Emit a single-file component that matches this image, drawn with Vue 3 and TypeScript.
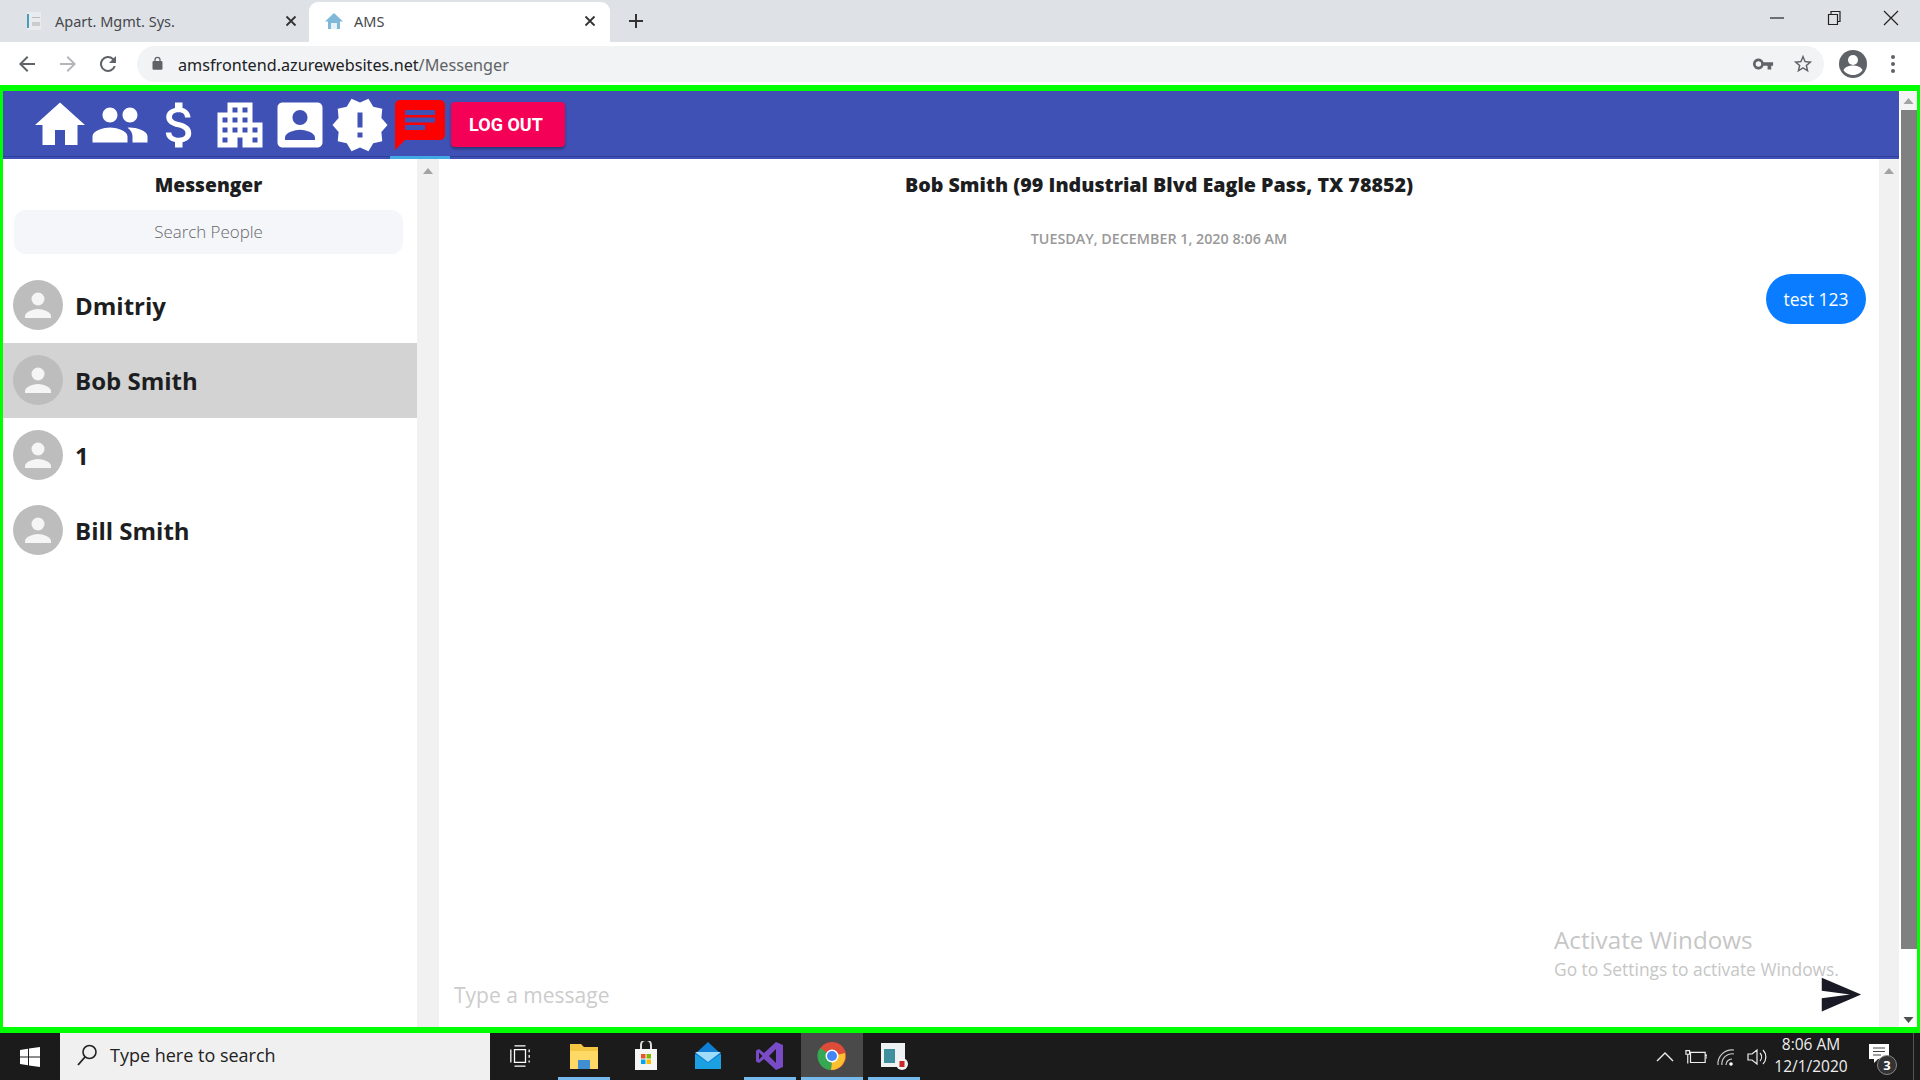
<script setup lang="ts">
interface NavIcon { name: string; d: string; active?: boolean }
const navIcons: NavIcon[] = [
  { name: 'home', d: 'M10 20v-6h4v6h5v-8h3L12 3 2 12h3v8z' },
  { name: 'people', d: 'M16 11c1.66 0 2.99-1.34 2.99-3S17.66 5 16 5c-1.66 0-3 1.34-3 3s1.34 3 3 3zm-8 0c1.66 0 2.99-1.34 2.99-3S9.66 5 8 5C6.34 5 5 6.34 5 8s1.34 3 3 3zm0 2c-2.33 0-7 1.17-7 3.5V19h14v-2.5c0-2.33-4.67-3.5-7-3.5zm8 0c-.29 0-.62.02-.97.05 1.16.84 1.97 1.97 1.97 3.45V19h6v-2.5c0-2.33-4.67-3.5-7-3.5z' },
  { name: 'money', d: 'M11.8 10.9c-2.27-.59-3-1.2-3-2.15 0-1.09 1.01-1.85 2.7-1.85 1.78 0 2.44.85 2.5 2.1h2.21c-.07-1.72-1.12-3.3-3.21-3.81V3h-3v2.16c-1.94.42-3.5 1.68-3.5 3.61 0 2.31 1.91 3.46 4.7 4.13 2.5.6 3 1.48 3 2.41 0 .69-.49 1.79-2.7 1.79-2.06 0-2.87-.92-2.98-2.1h-2.2c.12 2.19 1.76 3.42 3.68 3.83V21h3v-2.15c1.95-.37 3.5-1.5 3.5-3.55 0-2.84-2.43-3.81-4.7-4.4z' },
  { name: 'building', d: 'M17 11V3H7v4H3v14h8v-4h2v4h8V11h-4zM7 19H5v-2h2v2zm0-4H5v-2h2v2zm0-4H5V9h2v2zm4 4H9v-2h2v2zm0-4H9V9h2v2zm0-4H9V5h2v2zm4 8h-2v-2h2v2zm0-4h-2V9h2v2zm0-4h-2V5h2v2zm4 12h-2v-2h2v2zm0-4h-2v-2h2v2z' },
  { name: 'account', d: 'M3 5v14c0 1.1.89 2 2 2h14c1.1 0 2-.9 2-2V5c0-1.1-.9-2-2-2H5c-1.11 0-2 .9-2 2zm12 4c0 1.66-1.34 3-3 3s-3-1.34-3-3 1.34-3 3-3 3 1.34 3 3zm-9 8c0-2 4-3.1 6-3.1s6 1.1 6 3.1v1H6v-1z' },
  { name: 'alert', d: 'M23 12l-2.44-2.78.34-3.68-3.61-.82-1.89-3.18L12 3 8.6 1.54 6.71 4.72l-3.61.81.34 3.68L1 12l2.44 2.78-.34 3.69 3.61.82 1.89 3.18L12 21l3.4 1.46 1.89-3.18 3.61-.82-.34-3.68L23 12zm-10 5h-2v-2h2v2zm0-4h-2V7h2v6z' },
  { name: 'chat', active: true, d: 'M20 2H4c-1.1 0-1.99.9-1.99 2L2 22l4-4h14c1.1 0 2-.9 2-2V4c0-1.1-.9-2-2-2zM6 9h12v2H6V9zm8 5H6v-2h8v2zm4-6H6V6h12v2z' },
]
const people: { name: string; selected?: boolean }[] = [
  { name: 'Dmitriy' },
  { name: 'Bob Smith', selected: true },
  { name: '1' },
  { name: 'Bill Smith' },
]
</script>

<template>
  <div class="screen">
    <div class="tabstrip">
      <div class="tab">
        <svg class="fav" viewBox="0 0 20 20"><rect x="3" y="1" width="14" height="18" fill="#e8ecef" /><rect x="3" y="3" width="2" height="14" fill="#4a9db5" /><rect x="8" y="6" width="8" height="1" fill="#bbb" /><rect x="8" y="11" width="8" height="4" fill="#ccc" /></svg>
        <span class="tabtitle">Apart. Mgmt. Sys.</span>
        <svg class="tabx" viewBox="0 0 12 12"><path d="M1.5 1.5l9 9m0-9l-9 9" stroke="#333" stroke-width="1.8" /></svg>
      </div>
      <div class="tab current">
        <svg class="fav" viewBox="0 0 20 20"><path d="M10 2L1 10.500h3V18h12v-7.500h3z" fill="#7fb8d8" /><path d="M7 18v-6h6v6z" fill="#e6f2f8" /></svg>
        <span class="tabtitle">AMS</span>
        <svg class="tabx" viewBox="0 0 12 12"><path d="M1.5 1.5l9 9m0-9l-9 9" stroke="#333" stroke-width="1.8" /></svg>
      </div>
      <svg class="newtab" viewBox="0 0 16 16"><path d="M8 1v14M1 8h14" stroke="#333" stroke-width="2" /></svg>
      <div class="winctl">
        <svg viewBox="0 0 16 16" class="wbtn"><path d="M1 8h14" stroke="#222" stroke-width="1.2" /></svg>
        <svg viewBox="0 0 16 16" class="wbtn"><path d="M2.500 4.500h9v10h-9zM5 4.500V1.500h9v10h-2.500" fill="none" stroke="#222" stroke-width="1.2" /></svg>
        <svg viewBox="0 0 16 16" class="wbtn"><path d="M1 1l14 14m0-14L1 15" stroke="#222" stroke-width="1.2" /></svg>
      </div>
    </div>

    <div class="toolbar">
      <svg class="tool" viewBox="0 0 24 24"><path d="M20 11H7.800l5.600-5.600L12 4l-8 8 8 8 1.400-1.400L7.800 13H20z" fill="#5f6368" /></svg>
      <svg class="tool second" viewBox="0 0 24 24"><path d="M4 11h12.200l-5.600-5.600L12 4l8 8-8 8-1.400-1.400 5.600-5.600H4z" fill="#b4b6b9" /></svg>
      <svg class="tool" viewBox="0 0 24 24"><path d="M17.650 6.350A8 8 0 1 0 19.730 14h-2.080a6 6 0 1 1-1.410-6.240L13 11h7V4z" fill="#5f6368" /></svg>
      <div class="omnibox">
        <svg class="lock" viewBox="0 0 24 24"><path d="M18 8h-1V6a5 5 0 0 0-10 0v2H6a2 2 0 0 0-2 2v10c0 1.100.9 2 2 2h12a2 2 0 0 0 2-2V10a2 2 0 0 0-2-2zM9 6a3 3 0 0 1 6 0v2H9z" fill="#5f6368" /></svg>
        <span class="url">amsfrontend.azurewebsites.net<span class="urlpath">/Messenger</span></span>
        <svg class="key" viewBox="0 0 24 24"><path d="M12.650 10A6 6 0 1 0 12.650 14H17v4h4v-4h2v-4zM7 15a3 3 0 1 1 0-6 3 3 0 0 1 0 6z" fill="#5f6368" /></svg>
        <svg class="star" viewBox="0 0 24 24"><path d="M22 9.240l-7.190-.62L12 2 9.190 8.630 2 9.240l5.460 4.730L5.820 21 12 17.270 18.180 21l-1.630-7.030L22 9.240zM12 15.400l-3.760 2.270 1-4.280-3.320-2.880 4.380-.38L12 6.100l1.710 4.040 4.380.38-3.320 2.880 1 4.280L12 15.400z" fill="#5f6368" /></svg>
      </div>
      <svg class="profile" viewBox="0 0 28 28"><circle cx="14" cy="14" r="14" fill="#5f6368" /><circle cx="14" cy="10" r="5" fill="#fff" /><path d="M4.500 20c2-3.500 6-4.500 9.500-4.500s7.500 1 9.500 4.500c-2 3.500-6 5-9.500 5s-7.500-1.500-9.500-5z" fill="#fff" /></svg>
      <svg class="dots" viewBox="0 0 4 20"><circle cx="2" cy="3" r="2" fill="#5f6368" /><circle cx="2" cy="10" r="2" fill="#5f6368" /><circle cx="2" cy="17" r="2" fill="#5f6368" /></svg>
    </div>

    <div class="frame">
      <div class="page">
        <header class="appbar">
          <nav class="nav">
            <a v-for="icon in navIcons" :key="icon.name" class="navitem" :class="{ active: icon.active }">
              <svg viewBox="0 0 24 24" class="navicon"><path :d="icon.d" :fill="icon.active ? '#ff0000' : '#ffffff'" /></svg>
            </a>
          </nav>
          <button class="logout">LOG OUT</button>
        </header>

        <div class="content">
          <aside class="sidebar">
            <div class="sidehead">
              <div class="sidetitle">Messenger</div>
              <div class="search">Search People</div>
            </div>
            <div class="peoplelist">
              <div v-for="p in people" :key="p.name" class="person" :class="{ selected: p.selected }">
                <svg class="avatar" viewBox="0 0 50 50">
                  <circle cx="25" cy="25" r="25" fill="#bdbdbd" />
                  <circle cx="25" cy="19" r="6.500" fill="#f5f5f5" />
                  <path d="M12 38v-2c0-4 8-7 13-7s13 3 13 7v2z" fill="#f5f5f5" />
                </svg>
                <span class="pname">{{ p.name }}</span>
              </div>
            </div>
          </aside>
          <div class="sbar">
            <svg class="sarrow" viewBox="0 0 10 6"><path d="M5 0l5 6H0z" fill="#a3a3a3" /></svg>
          </div>

          <section class="chat">
            <div class="chattitle">Bob Smith (99 Industrial Blvd Eagle Pass, TX 78852)</div>
            <div class="chatdate">TUESDAY, DECEMBER 1, 2020 8:06 AM</div>
            <div class="messages">
              <div class="bubble">test 123</div>
            </div>
            <div class="composer">
              <span class="typemsg">Type a message</span>
              <svg class="send" viewBox="0 0 24 24"><path d="M2.010 21L23 12 2.010 3 2 10l15 2-15 2z" fill="#1a1a26" /></svg>
            </div>
            <div class="activate">
              <div class="act1">Activate Windows</div>
              <div class="act2">Go to Settings to activate Windows.</div>
            </div>
          </section>
          <div class="sbar chatbar">
            <svg class="sarrow" viewBox="0 0 10 6"><path d="M5 0l5 6H0z" fill="#a3a3a3" /></svg>
          </div>
        </div>
      </div>
      <div class="pagebar">
        <div class="pbtn"><svg viewBox="0 0 10 6" class="parrow"><path d="M5 0l5 6H0z" fill="#a3a3a3" /></svg></div>
        <div class="pthumb"></div>
        <div class="pbtn pbottom"><svg viewBox="0 0 10 6" class="parrow"><path d="M5 6L0 0h10z" fill="#505050" /></svg></div>
      </div>
    </div>

    <footer class="taskbar">
      <svg class="winlogo" viewBox="0 0 20 20"><path d="M0 3l8-1.200V9.500H0zM9 1.600L20 0v9.500H9zM0 10.500h8v7.700L0 17zM9 10.500h11V20L9 18.400z" fill="#fff" /></svg>
      <div class="tasksearch">
        <svg class="mag" viewBox="0 0 24 24"><circle cx="14.500" cy="9" r="6.500" fill="none" stroke="#222" stroke-width="1.600" /><path d="M10 14L3 22" stroke="#222" stroke-width="1.800" /></svg>
        <span>Type here to search</span>
      </div>
      <div class="tasks">
        <div class="task plain">
          <svg viewBox="0 0 24 24" class="ticon small"><path d="M6 1h12M6 5h12v14H6zM6 23h12M2 5v14M22 5v3M22 11v3M22 17v2" fill="none" stroke="#fff" stroke-width="1.400" /></svg>
        </div>
        <div class="task running">
          <svg viewBox="0 0 30 30" class="ticon"><path d="M1 3h11l3 3h14v22H1z" fill="#f4c542" /><rect x="1" y="10" width="28" height="18" fill="#ffd966" /><rect x="9" y="19" width="12" height="9" fill="#3f8fd2" /></svg>
        </div>
        <div class="task">
          <svg viewBox="0 0 30 30" class="ticon"><path d="M10 8V4a5 5 0 0 1 10 0v4" fill="none" stroke="#ddd" stroke-width="2" /><rect x="4" y="8" width="22" height="21" fill="#f5f5f5" /><rect x="10" y="13" width="4.500" height="4.500" fill="#e8542f" /><rect x="15.500" y="13" width="4.500" height="4.500" fill="#7fb900" /><rect x="10" y="18.500" width="4.500" height="4.500" fill="#00a4ef" /><rect x="15.500" y="18.500" width="4.500" height="4.500" fill="#ffb900" /></svg>
        </div>
        <div class="task">
          <svg viewBox="0 0 30 30" class="ticon"><path d="M15 1l13 12v15H2V13z" fill="#0f7fd6" /><path d="M2 11h26L15 21z" fill="#9fdcfa" /><path d="M2 13l13 9 13-9v15H2z" fill="#1ba1e2" /></svg>
        </div>
        <div class="task running">
          <svg viewBox="0 0 30 30" class="ticon"><path d="M21 1l7 3v22l-7 3L9 18l-5 4-3-1.500V9.500L4 8l5 4z" fill="#7a4bc7" /><path d="M21 8l-7 7 7 7z" fill="#1b1b1b" /><path d="M4 11.500v7l3.500-3.500z" fill="#1b1b1b" /></svg>
        </div>
        <div class="task running active">
          <svg viewBox="0 0 30 30" class="ticon"><circle cx="15" cy="15" r="14" fill="#dd4b39" /><path d="M15 15L28 12a14 14 0 0 1-14 17z" fill="#fbc02d" /><path d="M15 15L14 29A14 14 0 0 1 3 7z" fill="#34a853" /><circle cx="15" cy="15" r="6.500" fill="#fff" /><circle cx="15" cy="15" r="5" fill="#4285f4" /></svg>
        </div>
        <div class="task running">
          <svg viewBox="0 0 30 30" class="ticon"><rect x="2" y="2" width="24" height="24" fill="#eef2f3" /><rect x="5" y="8" width="11" height="14" fill="#3f8f9f" /><circle cx="23" cy="23" r="6" fill="#f3f3f3" /><rect x="20.500" y="20" width="5" height="6" fill="#c62828" /></svg>
        </div>
      </div>
      <div class="tray">
        <svg class="trayi" viewBox="0 0 20 20"><path d="M2 14l8-8 8 8" fill="none" stroke="#eee" stroke-width="1.400" /></svg>
        <svg class="trayi" viewBox="0 0 24 20"><path d="M6 5h16v11H6zM22 8h2v4M1 3h4v4H1zM3 7v10" fill="none" stroke="#eee" stroke-width="1.300" /></svg>
        <svg class="trayi" viewBox="0 0 22 20"><path d="M2 18A14 14 0 0 1 18 3M6 18A10 10 0 0 1 18 7M10 18a6 6 0 0 1 6-6" fill="none" stroke="#ccc" stroke-width="1.200" /><circle cx="15" cy="17" r="1.800" fill="#fff" /></svg>
        <svg class="trayi" viewBox="0 0 22 20"><path d="M1 7h4l5-4v14l-5-4H1zM13 6a6 6 0 0 1 0 8M16 3a10 10 0 0 1 0 14" fill="none" stroke="#eee" stroke-width="1.200" /></svg>
      </div>
      <div class="clock">
        <div>8:06 AM</div>
        <div>12/1/2020</div>
      </div>
      <div class="notify">
        <svg class="noteicon" viewBox="0 0 20 20"><path d="M0 0h20v15H9l-4 4v-4H0z" fill="#fff" /><path d="M4 4h12M4 7.500h12M4 11h8" stroke="#444" stroke-width="1" /></svg>
        <span class="badge">3</span>
      </div>
    </footer>
  </div>
</template>

<style>
html, body { margin: 0; padding: 0; overflow: hidden; background: #fff; }
</style>

<style scoped>
.screen { width: 1920px; height: 1080px; display: flex; flex-direction: column; font-family: "Open Sans", sans-serif; overflow: hidden; }

.tabstrip { height: 42px; flex: none; background: #dee1e6; display: flex; align-items: flex-end; }
.tab { width: 309px; height: 40px; display: flex; align-items: center; box-sizing: border-box; padding: 0 12px 2px 24px; font: 14.500px "Noto Sans", sans-serif; color: #45484c; }
.tab.current { width: 301px; background: #fff; border-radius: 9px 9px 0 0; padding: 0 14px 2px 15px; }
.fav { width: 20px; height: 20px; flex: none; margin-right: 11px; }
.tab.current .fav { margin-right: 10px; }
.tabtitle { flex: 1; }
.tabx { width: 12px; height: 12px; flex: none; }
.newtab { width: 16px; height: 16px; margin: 0 0 13px 18px; flex: none; }
.winctl { margin-left: auto; height: 42px; display: flex; align-items: flex-start; gap: 41px; padding: 10px 21px 0 0; box-sizing: border-box; }
.wbtn { width: 16px; height: 16px; }

.toolbar { height: 43px; flex: none; background: #fff; display: flex; align-items: center; box-sizing: border-box; padding: 0 0 0 15px; }
.tool { width: 24px; height: 24px; flex: none; margin-right: 17px; }
.tool.second { margin-right: 16px; }
.omnibox { flex: none; width: 1687px; height: 36px; background: #f1f3f4; border-radius: 18px; display: flex; align-items: center; box-sizing: border-box; padding-left: 13px; }
.lock { width: 15px; height: 15px; margin-right: 13px; flex: none; }
.url { font: 16.200px "Noto Sans", sans-serif; color: #202124; padding-top: 2px; }
.urlpath { color: #5f6368; }
.key { width: 22px; height: 22px; margin-left: auto; }
.star { width: 22px; height: 22px; margin: 0 10px 0 18px; }
.profile { width: 28px; height: 28px; margin-left: 15px; flex: none; }
.dots { width: 4px; height: 20px; margin-left: 24px; flex: none; }

.frame { height: 948px; flex: none; box-sizing: border-box; border: solid #00ff00; border-width: 6px 3px 6px 3px; display: flex; background: #fff; }
.page { flex: 1; min-width: 0; display: flex; flex-direction: column; }
.appbar { height: 68px; flex: none; background: #3f51b5; display: flex; align-items: center; padding-left: 27px; box-shadow: inset 0 -2px 0 #3f51b5, inset 0 -3px 0 #303f9f; }
.nav { display: flex; height: 68px; }
.navitem { width: 60px; height: 68px; display: flex; align-items: center; box-sizing: border-box; position: relative; }
.navitem.active::after { content: ""; position: absolute; left: 0; right: 0; bottom: 0; height: 3px; background: #43a9e5; }
.navicon { width: 60px; height: 60px; display: block; }
.logout { margin: -2px 0 0 1px; width: 114px; height: 45px; border: 0; border-radius: 4px; background: #f50057; color: #fff; font: 700 18px Roboto, sans-serif; box-shadow: 0 2px 3px rgba(0,0,0,.35); padding: 0 4px 0 0; }

.content { flex: 1; min-height: 0; display: flex; }
.sidebar { width: 414px; flex: none; }
.sidehead { padding: 14px 14px 0 11px; }
.sidetitle { height: 24px; line-height: 24px; text-align: center; font-size: 19.200px; font-weight: 800; color: #1c1e21; }
.search { margin-top: 13px; height: 44px; line-height: 44px; border-radius: 12px; background: #f5f6fa; text-align: center; font-size: 16.900px; font-weight: 300; color: #65676b; }
.peoplelist { margin-top: 14px; }
.person { height: 75px; display: flex; align-items: center; padding-left: 10px; }
.person.selected { background: #d3d3d3; }
.avatar { width: 50px; height: 50px; flex: none; margin: 0 12px 1px 0; }
.pname { font-size: 24px; font-weight: 700; color: #1c1e21; padding-bottom: 1px; }
.sbar { width: 22px; flex: none; background: #f1f1f1; display: flex; flex-direction: column; align-items: center; padding-top: 9px; box-sizing: border-box; }
.chatbar { width: 20px; }
.sarrow { width: 10px; height: 6px; }

.chat { flex: 1; min-width: 0; display: flex; flex-direction: column; position: relative; }
.chattitle { margin-top: 14px; height: 24px; line-height: 24px; text-align: center; font-size: 19.700px; font-weight: 800; color: #1c1e21; }
.chatdate { margin-top: 32px; height: 20px; line-height: 20px; text-align: center; font-size: 14.300px; font-weight: 600; color: #999; }
.messages { flex: 1; display: flex; flex-direction: column; align-items: flex-end; padding: 25px 13px 0 0; }
.bubble { width: 100px; height: 50px; border-radius: 25px; background: #0a7cff; color: #fff; font-size: 17.500px; line-height: 50px; text-align: center; }
.composer { height: 62px; flex: none; display: flex; align-items: center; padding: 0 16px 0 15px; position: relative; z-index: 1; }
.typemsg { font-size: 21px; color: #ccc; padding-bottom: 2px; }
.send { width: 45px; height: 45px; margin: 0 0 3px auto; }
.activate { position: absolute; left: 1115px; bottom: 45px; color: #c6c6c6; white-space: nowrap; }
.act1 { font-size: 24.200px; line-height: 32px; }
.act2 { font-size: 17.400px; line-height: 26px; }

.pagebar { width: 18px; flex: none; display: flex; flex-direction: column; }
.pbtn { height: 19px; flex: none; background: #f4f4f4; display: flex; align-items: center; justify-content: center; }
.pbottom { height: 78px; background: #fff; align-items: flex-end; padding-bottom: 4px; box-sizing: border-box; }
.parrow { width: 11px; height: 6px; }
.pthumb { flex: 1; background: #808080; margin-left: 2px; }

.taskbar { height: 47px; flex: none; background: #1b1b1b; display: flex; align-items: center; color: #fff; }
.winlogo { width: 20px; height: 20px; margin-left: 20px; flex: none; }
.tasksearch { width: 430px; height: 47px; margin-left: 20px; flex: none; background: #f0f0f0; color: #222; display: flex; align-items: center; font-size: 18px; box-sizing: border-box; padding: 0 0 3px 15px; }
.mag { width: 24px; height: 24px; margin-right: 11px; }
.tasks { display: flex; height: 47px; margin-left: 4px; }
.task { width: 62px; height: 47px; display: flex; align-items: center; justify-content: center; box-sizing: border-box; position: relative; padding-bottom: 2px; }
.task.plain { width: 59px; padding-right: 7px; }
.task.active { background: #4a4a4a; }
.task.running::after { content: ""; position: absolute; left: 5px; right: 5px; bottom: 0; height: 3px; background: #76b9ed; }
.task.active::after { left: 0; right: 0; }
.ticon { width: 30px; height: 30px; }
.ticon.small { width: 22px; height: 26px; }
.tray { margin-left: auto; display: flex; align-items: center; gap: 9px; }
.trayi { width: 22px; height: 20px; }
.clock { width: 84px; text-align: center; font-size: 15.500px; line-height: 22px; color: #eee; margin-bottom: 3px; }
.notify { width: 58px; height: 47px; margin-left: 3px; position: relative; display: flex; align-items: center; padding-left: 13px; box-sizing: border-box; border-right: 1px solid #555; margin-right: 6px; }
.noteicon { width: 20px; height: 20px; margin-bottom: 6px; }
.badge { position: absolute; left: 21px; top: 22px; width: 18px; height: 18px; border: 1px solid #888; border-radius: 50%; background: #333; text-align: center; font-size: 13px; line-height: 18px; font-weight: 700; }
</style>
